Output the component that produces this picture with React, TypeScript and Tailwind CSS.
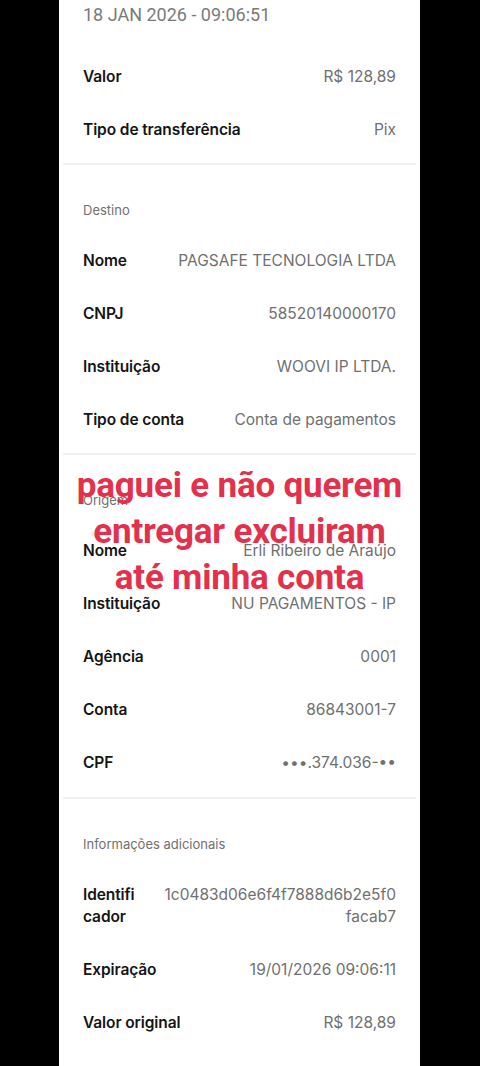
import React from 'react';

type Row = { label: React.ReactNode; value: React.ReactNode; tall?: boolean };

const body = { fontFamily: 'Inter, "Noto Sans", sans-serif' };

function DetailRow({ label, value, tall }: Row) {
  return (
    <div className={`flex items-center justify-between gap-4 px-6 ${tall ? 'h-[75px]' : 'h-[53px]'}`} style={body}>
      <span className="text-[15.5px] font-semibold text-[#151515] leading-[22px] shrink-0 tracking-[-0.1px]">{label}</span>
      <span className="text-[15.5px] text-[#707070] leading-[22px] text-right">{value}</span>
    </div>
  );
}

function Section({ title, rows, last }: { title?: string; rows: Row[]; last?: boolean }) {
  return (
    <div className={last ? 'pb-[8px]' : 'pb-[7px]'}>
      {title && (
        <div className="pt-[23px] h-[69px] px-6 flex items-center" style={body}>
          <span className="text-[13px] text-[#707070]">{title}</span>
        </div>
      )}
      {rows.map((r, i) => (
        <DetailRow key={i} {...r} />
      ))}
    </div>
  );
}

function Divider() {
  return <div className="mx-1 h-[2px] bg-[#f1f1f1]" />;
}

export default function App() {
  return (
    <div className="min-h-[1066px] w-full bg-black flex justify-center" style={{ fontFamily: 'Roboto, "Noto Sans", sans-serif' }}>
      <div className="relative w-[361px] ml-[-1px] bg-white h-[1066px] overflow-hidden">
        <div className="px-6 h-[28px] flex items-center">
          <span className="text-[18px] text-[#7a7a7a]">18 JAN 2026 - 09:06:51</span>
        </div>
        <div className="h-[22px]" />
        <Section
          rows={[
            { label: 'Valor', value: 'R$ 128,89' },
            { label: 'Tipo de transferência', value: 'Pix' },
          ]}
        />
        <Divider />
        <Section
          title="Destino"
          rows={[
            { label: 'Nome', value: 'PAGSAFE TECNOLOGIA LTDA' },
            { label: 'CNPJ', value: '58520140000170' },
            { label: 'Instituição', value: 'WOOVI IP LTDA.' },
            { label: 'Tipo de conta', value: 'Conta de pagamentos' },
          ]}
        />
        <Divider />
        <Section
          title="Origem"
          last
          rows={[
            { label: 'Nome', value: 'Erli Ribeiro de Araújo' },
            { label: 'Instituição', value: 'NU PAGAMENTOS - IP' },
            { label: 'Agência', value: '0001' },
            { label: 'Conta', value: '86843001-7' },
            { label: 'CPF', value: '•••.374.036-••' },
          ]}
        />
        <Divider />
        <Section
          title="Informações adicionais"
          rows={[
            {
              label: (
                <>
                  <span className="block">Identifi</span>
                  <span className="block">cador</span>
                </>
              ),
              value: (
                <>
                  <span className="block">1c0483d06e6f4f7888d6b2e5f0</span>
                  <span className="block">facab7</span>
                </>
              ),
              tall: true,
            },
            { label: 'Expiração', value: '19/01/2026 09:06:11' },
            { label: 'Valor original', value: 'R$ 128,89' },
          ]}
        />

        {/* overlay caption */}
        <div className="absolute left-0 right-0 top-[463px] flex flex-col items-center text-[#e3304c] font-bold text-[35px] leading-[46px] tracking-[-0.2px]">
          <span>paguei e não querem</span>
          <span>entregar excluiram</span>
          <span>até minha conta</span>
        </div>
      </div>
    </div>
  );
}
